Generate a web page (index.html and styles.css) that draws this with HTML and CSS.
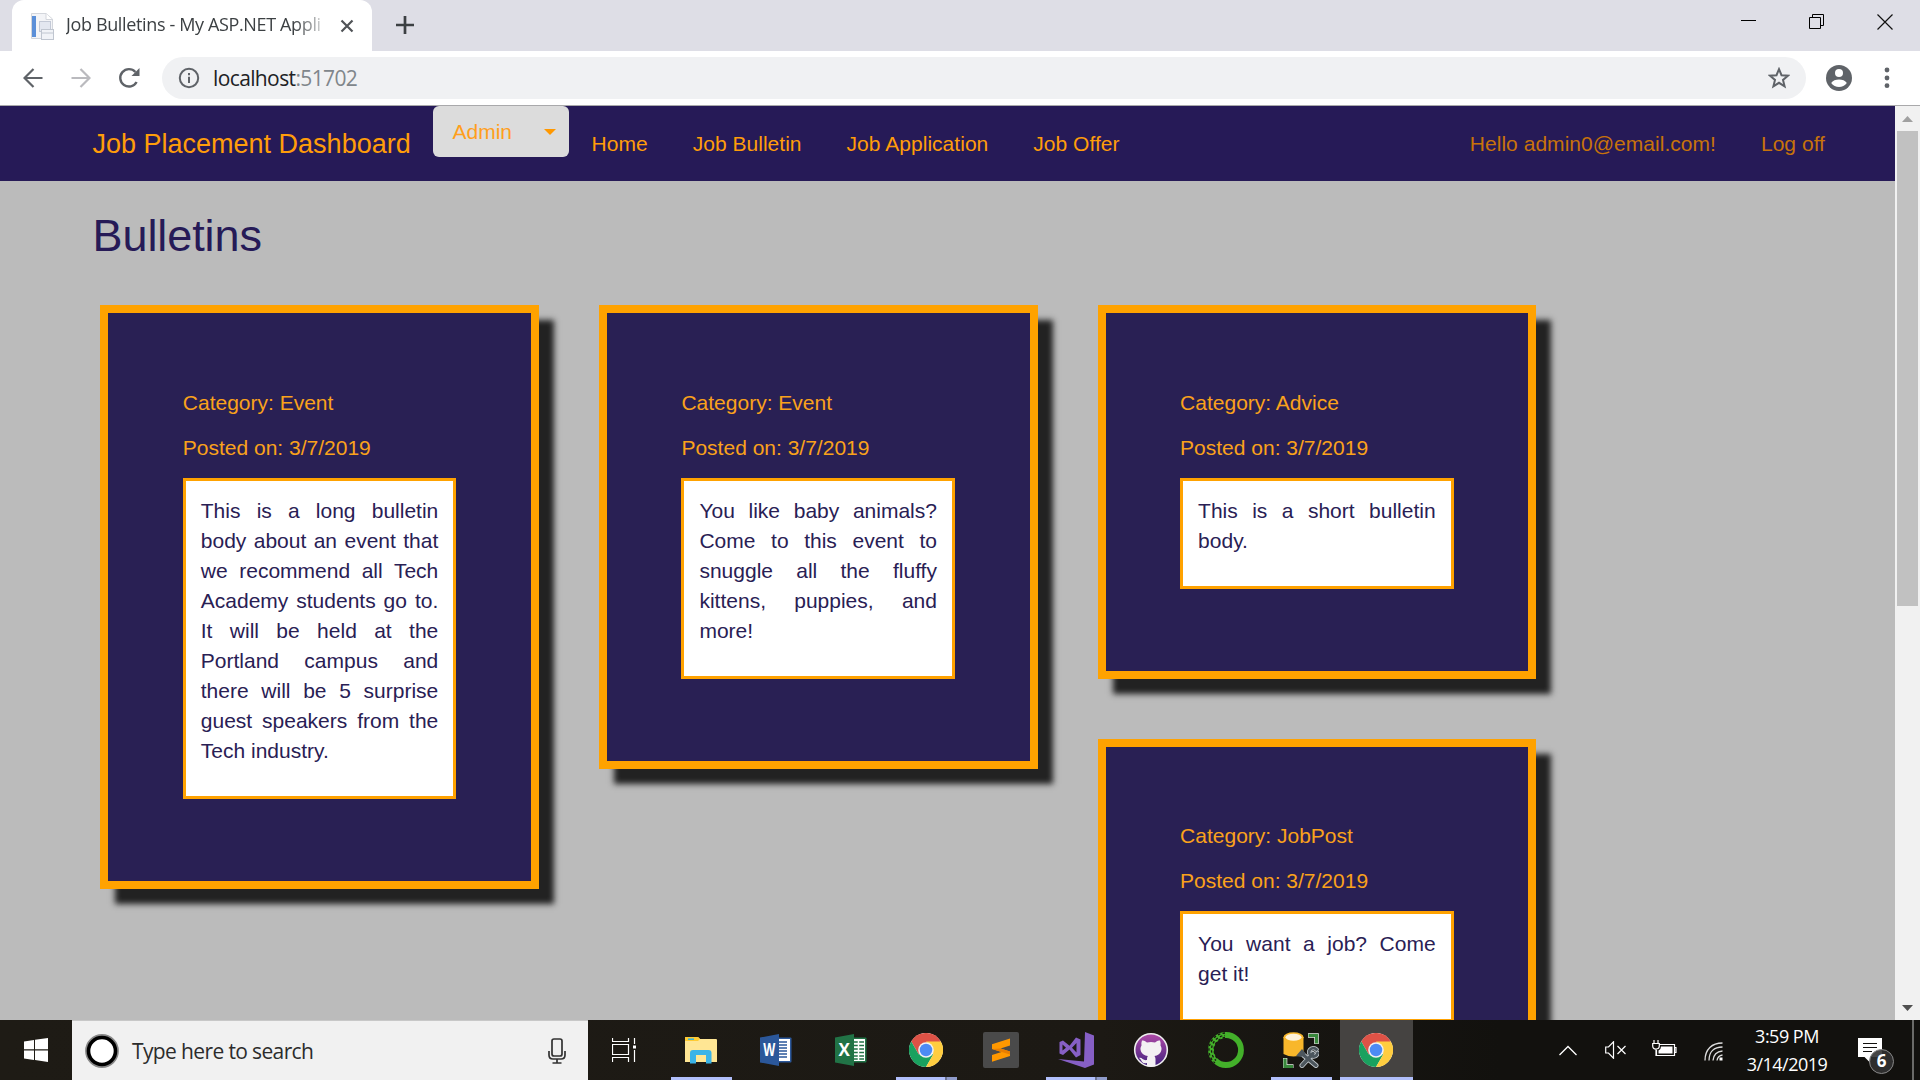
FILE: index.html
```html
<!DOCTYPE html>
<html lang="en">
<head>
<meta charset="utf-8">
<title>Job Bulletins - My ASP.NET Application</title>
<link rel="stylesheet" href="styles.css">
</head>
<body>
<svg class="defs" width="0" height="0">
  <symbol id="chrome" viewBox="0 0 48 48">
    <circle cx="24" cy="24" r="24" fill="#fff"/>
    <path d="M3.2 12 13.6 30 24 24 44.800 12A24 24 0 0 0 3.200 12z" fill="#de5246"/>
    <path d="M3.2 12A24 24 0 0 0 24 48L34.4 30H13.6z" fill="#1aa15f"/>
    <path d="M44.8 12H24L34.4 30 24 48A24 24 0 0 0 44.8 12z" fill="#ffcd40"/>
    <circle cx="24" cy="24" r="11" fill="#f1f1f1"/>
    <circle cx="24" cy="24" r="8.8" fill="#4c8bf5"/>
  </symbol>
</svg>

<header class="tabstrip">
  <div class="tab">
    <svg class="favicon" width="24" height="30" viewBox="0 0 24 30">
      <path d="M1.500 2.500H16L22.500 8V27.500H1.500z" fill="#f3f4f7" stroke="#d3d6dc"/>
      <path d="M16 2.500V8.500H22" fill="#fff" stroke="#d3d6dc"/>
      <rect x="2" y="5" width="4" height="21" fill="#5b8fd8"/>
      <rect x="9.500" y="10.500" width="11" height="10" fill="#e3e7f0" stroke="#c3c9d6"/>
      <rect x="11.500" y="18.500" width="12" height="10" fill="#f1f3f7" stroke="#c0c6d0"/>
      <path d="M12 22H23" stroke="#c0c6d0"/>
    </svg>
    <span class="tab-title">Job Bulletins - My ASP.NET Appli</span>
    <svg class="tab-close" width="14" height="14" viewBox="0 0 14 14"><path d="M1.500 1.500 12.500 12.500M12.500 1.500 1.500 12.500" stroke="#505357" stroke-width="2.200"/></svg>
  </div>
  <svg class="new-tab" width="18" height="18" viewBox="0 0 18 18"><path d="M9 0V18M0 9H18" stroke="#3c4043" stroke-width="2.700"/></svg>
  <div class="window-buttons">
    <svg width="16" height="16" viewBox="0 0 16 16"><path d="M0 6.500H15" stroke="#000"/></svg>
    <svg width="16" height="16" viewBox="0 0 16 16"><path d="M.5 3.500H11.500V14.500H.5zM3.500 3.500V.5H14.500V11.500H11.500" fill="none" stroke="#000"/></svg>
    <svg width="16" height="16" viewBox="0 0 16 16"><path d="M.5.5 15.500 15.500M15.500.5.5 15.500" stroke="#111" stroke-width="1.200"/></svg>
  </div>
</header>

<div class="toolbar">
  <svg class="tool back" width="20" height="20" viewBox="0 0 20 20"><path d="M19.500 10H2M10.500 1 1.500 10 10.500 19" fill="none" stroke="#5f6368" stroke-width="2.200"/></svg>
  <svg class="tool fwd" width="20" height="20" viewBox="0 0 20 20"><path d="M.5 10H18M9.500 1 18.500 10 9.500 19" fill="none" stroke="#bababe" stroke-width="2.200"/></svg>
  <svg class="tool reload" width="22" height="22" viewBox="0 0 22 22"><path d="M18.600 15A8.700 8.700 0 1 1 17.400 5" fill="none" stroke="#5f6368" stroke-width="2.400"/><path d="M21.500 1V9H13.500z" fill="#5f6368"/></svg>
  <div class="omnibox">
    <svg width="22" height="22" viewBox="0 0 22 22"><circle cx="11" cy="11" r="9.200" fill="none" stroke="#5f6368" stroke-width="2"/><path d="M11 9.800V16M11 6V8.200" stroke="#5f6368" stroke-width="2"/></svg>
    <span class="url">localhost<span class="port">:51702</span></span>
    <svg class="star" width="22" height="22" viewBox="0 0 22 22"><path d="M11 2.200 13.500 8.200 20 8.700 15 12.900 16.600 19.300 11 15.800 5.400 19.300 7 12.900 2 8.700 8.500 8.200z" fill="none" stroke="#5f6368" stroke-width="2"/></svg>
  </div>
  <svg class="profile" width="26" height="26" viewBox="0 0 26 26"><circle cx="13" cy="13" r="13" fill="#5f6368"/><circle cx="13" cy="8" r="4" fill="#fff"/><path d="M5.200 18C6.500 15.500 10 14.500 13 14.500S19.500 15.500 20.800 18C19 20.800 16 22 13 22S7 20.800 5.200 18z" fill="#fff"/></svg>
  <svg class="kebab" width="6" height="22" viewBox="0 0 6 22"><g fill="#5f6368"><circle cx="3" cy="3" r="2.400"/><circle cx="3" cy="11" r="2.400"/><circle cx="3" cy="18.700" r="2.400"/></g></svg>
</div>

<div class="viewport">
  <div class="page">
    <nav class="navbar">
      <a class="brand">Job Placement Dashboard</a>
      <button class="admin">Admin <i class="caret"></i></button>
      <a class="link">Home</a>
      <a class="link">Job Bulletin</a>
      <a class="link">Job Application</a>
      <a class="link">Job Offer</a>
      <div class="account">
        <a class="link">Hello admin0@email.com!</a>
        <a class="link">Log off</a>
      </div>
    </nav>
    <main class="content">
      <h2>Bulletins</h2>
      <div class="board">
        <div class="column">
          <article class="card">
            <p>Category: Event</p>
            <p>Posted on: 3/7/2019</p>
            <div class="body"><p>This is a long bulletin body about an event that we recommend all Tech Academy students go to. It will be held at the Portland campus and there will be 5 surprise guest speakers from the Tech industry.</p></div>
          </article>
        </div>
        <div class="column">
          <article class="card">
            <p>Category: Event</p>
            <p>Posted on: 3/7/2019</p>
            <div class="body"><p>You like baby animals? Come to this event to snuggle all the fluffy kittens, puppies, and more!</p></div>
          </article>
        </div>
        <div class="column">
          <article class="card">
            <p>Category: Advice</p>
            <p>Posted on: 3/7/2019</p>
            <div class="body"><p>This is a short bulletin body.</p></div>
          </article>
          <article class="card">
            <p>Category: JobPost</p>
            <p>Posted on: 3/7/2019</p>
            <div class="body"><p>You want a job? Come get it!</p></div>
          </article>
        </div>
      </div>
    </main>
  </div>
  <div class="scrollbar">
    <svg width="25" height="25" viewBox="0 0 25 25"><path d="M7 16 12.500 10 18 16z" fill="#a0a0a0"/></svg>
    <div class="thumb"></div>
    <svg class="down" width="25" height="25" viewBox="0 0 25 25"><path d="M7 10H18L12.500 16z" fill="#505050"/></svg>
  </div>
</div>

<footer class="taskbar">
  <div class="start"><svg width="24" height="24" viewBox="0 0 24 24"><path d="M0 3.400 10 2V11.300H0zM11 1.800 24 0V11.300H11zM0 12.400H10V21.900L0 20.500zM11 12.400H24V24L11 22.100z" fill="#fff"/></svg></div>
  <div class="search">
    <svg width="34" height="34" viewBox="0 0 34 34"><circle cx="17" cy="17" r="15.700" fill="none" stroke="#888" stroke-width="2.400"/><circle cx="17" cy="17" r="13.500" fill="#fff" stroke="#000" stroke-width="3.600"/></svg>
    <span>Type here to search</span>
    <svg class="mic" width="18" height="26" viewBox="0 0 18 26"><g fill="none" stroke="#333" stroke-width="1.700"><rect x="4" y="1" width="10" height="17" rx="2"/><path d="M1 13V17Q1 21 5 21H13Q17 21 17 17V13M9 21V25M4.500 25H13.500"/></g></svg>
  </div>
  <div class="app taskview"><svg width="26" height="24" viewBox="0 0 26 24"><path d="M.5 0V3.500H16.500V0M.5 6.500H16.500V16.500H.5zM.5 24V19.500H16.500V24M22.500 0V6M22.500 12V24" fill="none" stroke="#fff" stroke-width="1.200"/><rect x="21" y="7.500" width="3" height="3" fill="#fff"/></svg></div>
  <div class="app open"><svg width="32" height="28" viewBox="0 0 32 28"><path d="M0 2Q0 1 1 1H13L15 3H31Q32 3 32 4V26H0z" fill="#ffe694"/><path d="M0 5V2Q0 1 1 1H13L15 3 13 5z" fill="#ffcb33"/><rect x="3" y="2.400" width="6" height="1.600" fill="#3db5d8"/><path d="M5 27.500V17Q5 14 8 14H23.500Q26.500 14 26.500 17V27.500H21V19H11V27.500z" fill="#3bb4e8"/></svg></div>
  <div class="app"><svg width="32" height="32" viewBox="0 0 32 32"><rect x="17" y="3.500" width="14.500" height="25" rx="1" fill="#2b579a"/><rect x="18" y="5" width="12" height="22" fill="#fff"/><path d="M18 8H27M18 11H27M18 14H27M18 17H27M18 20H27M18 23H27" stroke="#2b579a" stroke-width="1.300"/><path d="M0 3.500 19 0V32L0 28.500z" fill="#2b579a"/><text x="9.200" y="21.500" text-anchor="middle" class="letter" textLength="12" lengthAdjust="spacingAndGlyphs">W</text></svg></div>
  <div class="app"><svg width="32" height="32" viewBox="0 0 32 32"><rect x="17" y="3.500" width="14.500" height="25" rx="1" fill="#217346"/><rect x="18" y="5" width="12" height="22" fill="#fff"/><path d="M18 8H29M18 11.500H29M18 15H29M18 18.500H29M18 22H29M18 25H29" stroke="#217346" stroke-width="1.300"/><path d="M23.500 6V26" stroke="#fff" stroke-width="1.500"/><path d="M0 3.500 19 0V32L0 28.500z" fill="#217346"/><text x="9.200" y="21.500" text-anchor="middle" class="letter">X</text></svg></div>
  <div class="app open stacked"><svg width="34" height="34"><use href="#chrome"/></svg></div>
  <div class="app"><svg width="36" height="36" viewBox="0 0 36 36"><rect width="36" height="36" rx="2" fill="#4a4a4a"/><path d="M9 12.300 27 6.500V13.500L17.500 16.500 27 19.500V24L9 29.800V23L18.500 20 9 17z" fill="#ff9800"/><path d="M9 17 27 22.500V19.500L17.500 16.500z" fill="#e87d00"/></svg></div>
  <div class="app open stacked"><svg width="36" height="36" viewBox="0 0 36 36"><path fill-rule="evenodd" d="M1.500 10 5 8.500 11.500 13.800 18 5.500 22.500 7.500V23L18 25.500 11.500 17.500 5 23 1.500 21.500zM4.500 12.500V18.500L8 15.700zM18.500 11 14 15.700 18.500 20.500z" fill="#865fc5"/><path d="M27 0 36 3.500V32.500L27 36 0 27 26 29.500z" fill="#865fc5"/></svg></div>
  <div class="app"><svg width="36" height="36" viewBox="0 0 36 36"><defs><linearGradient id="gh" x2="0" y2="1"><stop stop-color="#b04aa8"/><stop offset="1" stop-color="#42227f"/></linearGradient></defs><circle cx="18" cy="18" r="16.300" fill="url(#gh)" stroke="#eee" stroke-width="1.600"/><path d="M9 8.500C11 8 13 9.500 14 10.500Q18 9.500 22 10.500C23 9.500 25 8 27 8.500Q28 11 27.500 13.500C30 17 28 23 21.500 24Q22.500 25.500 22.500 27V34Q18 35.500 14 34V31C10 32 9 30 8 28Q7.500 26.800 6 26C9 25 10 29 14 28Q13.800 25.500 14.800 24C8 23 6 17 8.500 13.500Q8 11 9 8.500z" fill="#f3f0f3"/></svg></div>
  <div class="app"><svg width="36" height="36" viewBox="0 0 36 36"><circle cx="18" cy="18" r="15" fill="none" stroke="#43b02a" stroke-width="5.800"/><g fill="none" stroke="#191611" stroke-width="1.300" stroke-dasharray="2.500 2.300"><path d="M17 1A17 17 0 0 0 7 31"/><path d="M17 3.500A14.500 14.500 0 0 0 8 28.500" stroke-dashoffset="2"/><path d="M17 5.500A12.500 12.500 0 0 0 10 27"/></g></svg></div>
  <div class="app open"><svg width="36" height="36" viewBox="0 0 36 36"><path d="M.5 5V22Q10.500 27 20.500 22V5z" fill="#f8b72b"/><ellipse cx="10.500" cy="5.300" rx="10" ry="5" fill="#f8b72b"/><ellipse cx="10.500" cy="5.300" rx="8" ry="3.500" fill="#fff3da"/><path d="M25 3.500H33.500V12M2 26V34.500H10.500" fill="none" stroke="#e9eee9" stroke-width="4.600"/><path d="M25.500 3.500H33.500V11.500M2 26.500V34.500H10" fill="none" stroke="#39883c" stroke-width="3.200"/><g stroke-linecap="round" fill="none"><path d="M18.500 21.500 33 33.500M30 21.500 19 33.500" stroke="#c5ccd0" stroke-width="5"/><path d="M33.500 17.500A4.200 4.200 0 1 0 34.500 21" stroke="#c5ccd0" stroke-width="4.400"/><path d="M18.500 21.500 33 33.500M30 21.500 19 33.500" stroke="#4c565d" stroke-width="3.400"/><path d="M33.500 17.500A4.200 4.200 0 1 0 34.500 21" stroke="#4c565d" stroke-width="2.800"/></g><path d="M13 24 19 17 23 22 18 25z" fill="#4c565d"/></svg></div>
  <div class="app open active"><svg width="34" height="34"><use href="#chrome"/></svg></div>
  <div class="tray">
    <svg class="chevron" width="18" height="11" viewBox="0 0 18 11"><path d="M.5 10 9 1.500 17.500 10" fill="none" stroke="#fff" stroke-width="1.300"/></svg>
    <svg class="volume" width="22" height="18" viewBox="0 0 22 18"><path d="M.7 6H3.500L8.500.8V17.200L3.500 12H.7zM12.500 5 20.500 13M20.500 5 12.500 13" fill="none" stroke="#fff" stroke-width="1.200"/></svg>
    <svg class="battery" width="25" height="17" viewBox="0 0 25 17"><path d="M7.500 4.500H22.500V15.500H4.500V10M22.500 7.500H24V12.500H22.500M2 0V3M6 0V3M.7 3.500H7.300V6Q7.300 9 4 9T.7 6zM4 9V16" fill="none" stroke="#fff" stroke-width="1.200"/><path d="M9 6.500H20.500V13.500H6.500V10.500Q9 9.500 9 6.500z" fill="#fff"/></svg>
    <svg class="wifi" width="19" height="19" viewBox="0 0 19 19"><g fill="none" stroke="#ddd" stroke-width="1.300"><path d="M1 18.500C1 7 8 1 18.500 1M5 18.500C5 9.500 10 5 18.500 5"/><path d="M9 18.500C9.500 12.500 12.500 9.500 18.500 9"/><path d="M13 18.500C13.500 15 15 13.500 18.500 13"/></g><rect x="15.500" y="15.500" width="3" height="3" fill="#fff"/></svg>
    <div class="clock"><span>3:59 PM</span><span>3/14/2019</span></div>
    <div class="notify">
      <svg width="24" height="25" viewBox="0 0 24 25"><path d="M0 0H24V19H12.500V25L6.500 19H0z" fill="#fff"/><path d="M5 5.500H19M5 9.500H19M5 13.500H14" stroke="#12110e" stroke-width="1.200"/></svg>
      <b class="badge">6</b>
    </div>
    <i class="peek"></i>
  </div>
</footer>
</body>
</html>
```
FILE: styles.css
```css
* { box-sizing: border-box; }
body {
  margin: 0;
  width: 1920px;
  height: 1080px;
  overflow: hidden;
  display: flex;
  flex-direction: column;
  font-family: "Liberation Sans", Arial, sans-serif;
}
svg { display: block; flex: none; }
.defs { position: absolute; }

/* Browser chrome */
.tabstrip {
  height: 51px;
  flex: none;
  display: flex;
  background: #dedee6;
  padding-left: 12px;
}
.tab {
  width: 360px;
  background: #fff;
  border-radius: 12px 12px 0 0;
  display: flex;
  align-items: center;
  padding: 0 18px 0 18px;
}
.tab-title {
  width: 264px;
  margin: 0 0 3px 12px;
  white-space: nowrap;
  font: 18px/26px "Open Sans", "Noto Sans", sans-serif;
  letter-spacing: -0.36px;
  color: #3c4043;
  -webkit-mask-image: linear-gradient(90deg, #000 228px, transparent 264px);
  mask-image: linear-gradient(90deg, #000 228px, transparent 264px);
}
.tab-close { margin-left: 11px; }
.new-tab { margin: 16px 0 0 24px; }
.window-buttons {
  margin: 14px 27px 0 auto;
  display: flex;
  gap: 52px;
}
.toolbar {
  height: 55px;
  flex: none;
  display: flex;
  align-items: center;
  background: #fff;
  border-bottom: 1px solid #a9a9ab;
  padding-left: 23px;
}
.fwd { margin-left: 28px; }
.reload { margin-left: 27px; }
.omnibox {
  width: 1644px;
  height: 42px;
  margin-left: 22px;
  border-radius: 21px;
  background: #f0f1f3;
  display: flex;
  align-items: center;
  padding: 0 16px;
}
.url {
  margin-left: 13px;
  font: 21px/30px "Open Sans", "Noto Sans", sans-serif;
  letter-spacing: -0.62px;
  color: #202124;
}
.port { color: #80868b; }
.star { margin-left: auto; }
.profile { margin-left: 20px; }
.kebab { margin-left: 32px; }

/* Web page */
.viewport {
  height: 914px;
  flex: none;
  display: flex;
}
.page {
  width: 1895px;
  height: 914px;
  overflow: hidden;
  background: #bbb;
}
.navbar {
  height: 75px;
  display: flex;
  align-items: center;
  background: #261a57;
  padding: 0 47.500px 0 92.500px;
  font-size: 21px;
  line-height: 30px;
  color: #ff9d0a;
}
.brand { font-size: 27px; white-space: nowrap; width: 340px; }
.admin {
  width: 136.500px;
  height: 51px;
  align-self: flex-start;
  display: flex;
  align-items: center;
  justify-content: space-between;
  padding: 0 13px 0 20px;
  border: 0;
  border-radius: 6px;
  background: #dcdcdc;
  font: 21px/30px "Liberation Sans", Arial, sans-serif;
  color: #ff9f1c;
}
.caret {
  border: 6px solid transparent;
  border-top-color: #ff9800;
  border-bottom: 0;
}
.link { padding: 0 22.500px; white-space: nowrap; letter-spacing: .03px; }
.account {
  margin-left: auto;
  display: flex;
  color: #c8730a;
}
.content { padding: 0 0 0 92.500px; }
h2 {
  margin: 30px 0 0;
  font-size: 45px;
  font-weight: 400;
  line-height: 50px;
  letter-spacing: -0.08px;
  color: #261a57;
}
.board {
  display: flex;
  gap: 59.970px;
  padding: 44px 0 0 7.700px;
}
.column {
  width: 438.700px;
  display: flex;
  flex-direction: column;
  gap: 60px;
}
.card {
  border: 8px solid #ffa200;
  padding: 74.600px 74.600px 82px;
  background: #292054;
  box-shadow: 15px 15px 6px #222;
  font-size: 21px;
  line-height: 30px;
  color: #faa21b;
}
.card p { margin: 0 0 15px; }
.body {
  border: 3px solid #ffa200;
  padding: 15px;
  background: #fff;
  color: #292054;
  text-align: justify;
}
.scrollbar {
  width: 25px;
  background: #f1f1f1;
  display: flex;
  flex-direction: column;
}
.thumb { width: 21px; height: 475px; margin-left: 2px; background: #c1c1c1; }
.down { margin-top: auto; }

/* Windows taskbar */
.taskbar {
  height: 60px;
  flex: none;
  display: flex;
  background: linear-gradient(90deg, #1e1b15 0, #1c1914 1100px, #12110e 1500px);
}
.start { width: 72px; display: flex; align-items: center; padding-left: 24px; }
.search {
  width: 516px;
  border-top: 1px solid #c8c8c8;
  background: #f1f1f1;
  display: flex;
  align-items: center;
  padding: 0 22px 0 13px;
  font: 21px/30px "Open Sans", "Noto Sans", sans-serif;
  letter-spacing: -0.63px;
  color: #2c2c2c;
}
.search span { margin-left: 13px; white-space: nowrap; }
.mic { margin-left: auto; }
.app {
  width: 61px;
  margin: 0 7px;
  padding-right: 1px;
  display: flex;
  align-items: center;
  justify-content: center;
}
.app.taskview { width: 72px; margin: 0 4px 0 0; padding: 0 0 0 2px; }
.open { border-bottom: 3px solid #b1bffb; padding-top: 3px; }
.stacked { border-image: linear-gradient(90deg, #b1bffb 47px, #6a7190 47px, #6a7190 49px, #8f9bca 49px) 3; }
.active { width: 73px; margin: 0 1px; background: #454341; }
.letter { font: bold 17px "Open Sans", sans-serif; fill: #fff; }
.tray {
  margin-left: auto;
  display: flex;
  align-items: center;
  color: #fff;
}
.volume { margin-left: 28px; }
.battery { margin-left: 25px; margin-top: -3px; }
.wifi { margin-left: 27px; margin-top: 3px; }
.clock {
  width: 86px;
  margin: 0 1px 0 21px;
  display: flex;
  flex-direction: column;
  align-items: center;
  font: 18px/28px "Open Sans", "Noto Sans", sans-serif;
  letter-spacing: -0.5px;
  white-space: nowrap;
}
.notify { position: relative; margin-left: 27px; }
.badge {
  position: absolute;
  left: 11px;
  top: 11px;
  width: 25px;
  height: 25px;
  border: 1px solid #888;
  border-radius: 50%;
  background: rgba(50, 50, 50, .9);
  font: bold 17px/22px "Open Sans", sans-serif;
  text-align: center;
}
.peek { width: 2px; height: 60px; margin: 0 6px 0 30px; background: #6a6a68; }
```
